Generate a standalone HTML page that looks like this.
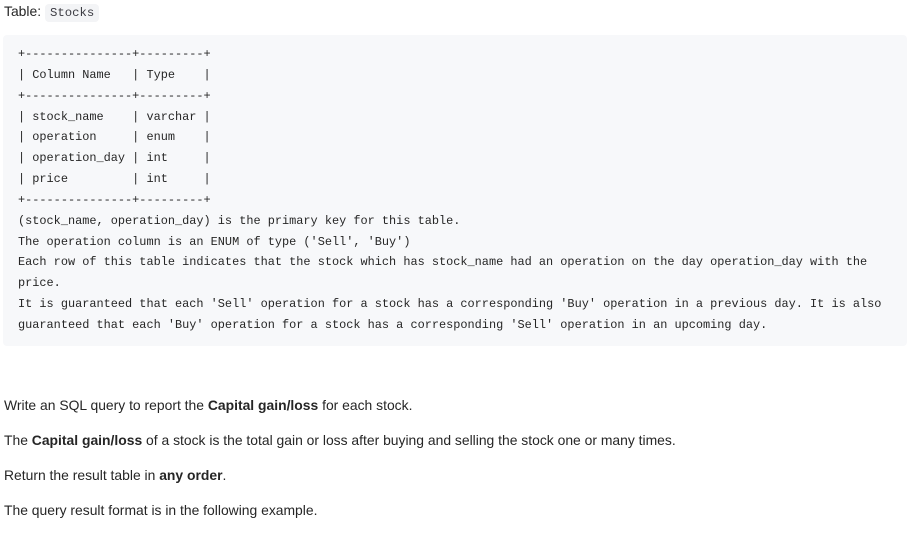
<!DOCTYPE html>
<html><head><meta charset="utf-8"><style>
body{margin:0;background:#fff;width:919px;height:538px;overflow:hidden;font-family:"Liberation Sans",sans-serif;color:#262626;font-size:13.9px}
.t{position:absolute;left:4px;white-space:nowrap}
code{font-family:"Liberation Mono",monospace;font-size:12.3px;background:#f3f4f6;border-radius:4px;padding:2px 5px;color:#3c3c43}
.pre{position:absolute;left:3px;top:35px;width:904px;height:311px;background:#f7f8fa;border-radius:4px}
.pre div{position:absolute;left:15px;top:9px;font-family:"Liberation Mono",monospace;font-size:11.9px;line-height:20.85px;white-space:pre;color:#262626}
b{font-weight:bold}
</style></head><body>
<div class="t" style="top:3px">Table: <code>Stocks</code></div>
<div class="pre"><div>+---------------+---------+
| Column Name   | Type    |
+---------------+---------+
| stock_name    | varchar |
| operation     | enum    |
| operation_day | int     |
| price         | int     |
+---------------+---------+
(stock_name, operation_day) is the primary key for this table.
The operation column is an ENUM of type ('Sell', 'Buy')
Each row of this table indicates that the stock which has stock_name had an operation on the day operation_day with the
price.
It is guaranteed that each 'Sell' operation for a stock has a corresponding 'Buy' operation in a previous day. It is also
guaranteed that each 'Buy' operation for a stock has a corresponding 'Sell' operation in an upcoming day.</div></div>
<div class="t" style="top:397px">Write an SQL query to report the <b>Capital gain/loss</b> for each stock.</div>
<div class="t" style="top:432px">The <b>Capital gain/loss</b> of a stock is the total gain or loss after buying and selling the stock one or many times.</div>
<div class="t" style="top:467px">Return the result table in <b>any order</b>.</div>
<div class="t" style="top:502px">The query result format is in the following example.</div>
</body></html>
